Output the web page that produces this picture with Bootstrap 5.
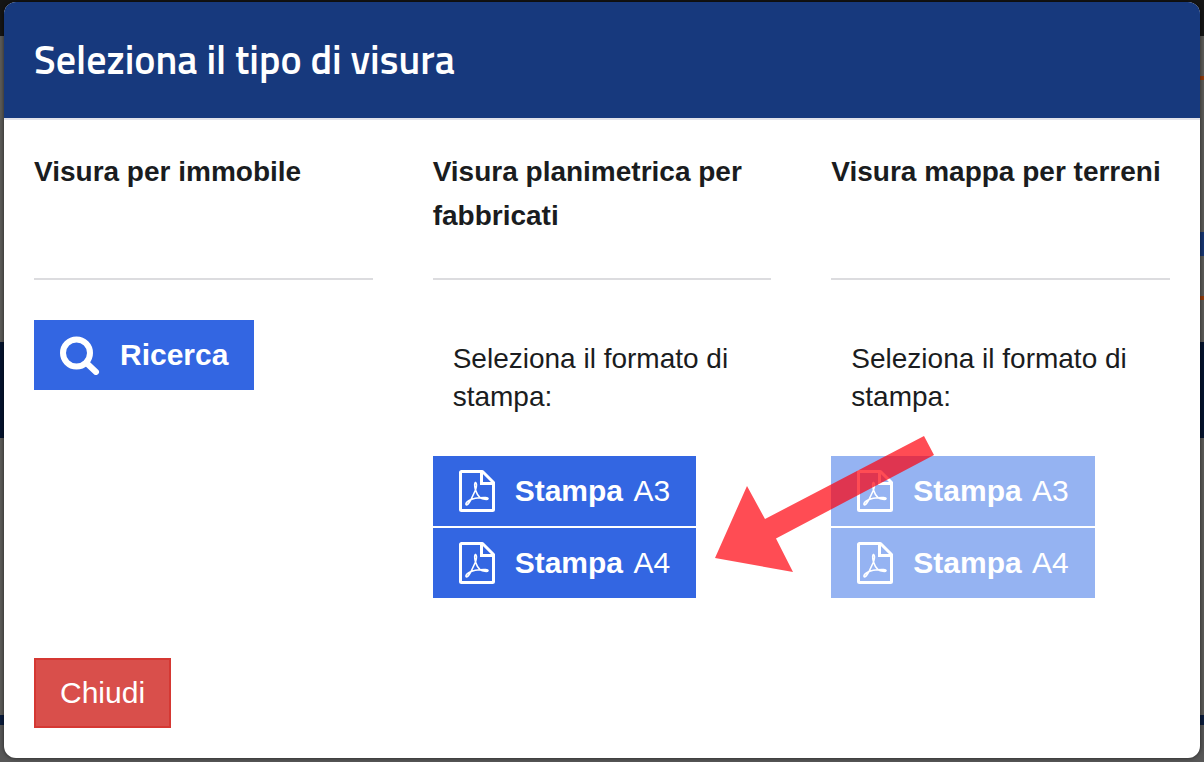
<!DOCTYPE html>
<html lang="it">
<head>
<meta charset="utf-8">
<meta name="viewport" content="width=device-width, initial-scale=1">
<title>Seleziona il tipo di visura</title>
<link href="https://cdn.jsdelivr.net/npm/bootstrap@5.3.0/dist/css/bootstrap.min.css" rel="stylesheet">
<style>
  body {
    font-family: "Liberation Sans", Arial, sans-serif;
    font-size: 28px;
    line-height: 38px;
    color: #1a1c20;
    background: #5a5a5a;
  }
  /* dimmed page behind the dialog */
  .backdrop-page {
    min-height: 100vh;
    padding: 2px 4px 4px;
    background: linear-gradient(#151515 36px, #5c5b58 36px 342px, #05132e 342px 438px, #5c5b58 438px 715px, #0a1c3c 715px 725px, #575757 725px);
  }
  .backdrop-edge { width: 4px; background: linear-gradient(transparent 76px, #943b0a 76px 80px, transparent 80px 232px, #173671 232px 256px, transparent 256px 296px, #943b0a 296px 300px, transparent 300px); }
  .visura-dialog { border: 0; border-radius: 12px; box-shadow: 0 0 4px rgba(0, 0, 0, .6); }
  .visura-header {
    padding: 30px;
    background: #17397d;
    border-bottom: 2px solid #e3e3ea;
    border-radius: 12px 12px 0 0;
  }
  .visura-title { font: 600 40px/56px "Titillium Web", "Open Sans", sans-serif; }
  .visura-body { padding: 30px; }
  .visura-row { --bs-gutter-x: 60px; }
  .visura-heading {
    min-height: 130px;
    margin-bottom: 40px;
    border-bottom: 2px solid #dcdcdf;
    font-size: 28px;
    line-height: 44px;
    font-weight: 700;
  }
  .format-note { padding: 20px 20px 40px; margin: 0; }
  .btn-visura {
    --bs-btn-padding-x: 24px;
    --bs-btn-padding-y: 11px;
    --bs-btn-font-size: 30px;
    --bs-btn-line-height: 44px;
    --bs-btn-border-width: 2px;
    --bs-btn-border-radius: 0;
  }
  .btn-blue {
    --bs-btn-color: #fff;
    --bs-btn-bg: #3366e2;
    --bs-btn-border-color: #3366e2;
    --bs-btn-hover-color: #fff;
    --bs-btn-hover-bg: #2856c8;
    --bs-btn-hover-border-color: #2856c8;
    --bs-btn-disabled-color: #fff;
    --bs-btn-disabled-bg: #95b3f2;
    --bs-btn-disabled-border-color: #95b3f2;
    --bs-btn-disabled-opacity: 1;
  }
  .btn-red {
    --bs-btn-color: #fff;
    --bs-btn-bg: #d94f4b;
    --bs-btn-border-color: #d53833;
    --bs-btn-hover-color: #fff;
    --bs-btn-hover-bg: #c43d39;
    --bs-btn-hover-border-color: #b52f2b;
  }
  .btn-icon { display: inline-flex; align-items: center; gap: 20px; }
  .btn-icon svg { flex: none; }
  .paper-size { margin-left: 2px; }
  .print-stack { gap: 2px; }
  .footer-actions { margin-top: 60px; }
  .pointer-arrow { position: absolute; left: -117px; top: -22px; pointer-events: none; z-index: 2; }
</style>
</head>
<body>
<svg class="d-none" aria-hidden="true">
  <symbol id="icon-pdf" viewBox="0 0 36 42">
    <path d="M23 1.500H2.500a1 1 0 0 0-1 1v37a1 1 0 0 0 1 1h31a1 1 0 0 0 1-1V12.500L24.500 2.500q-1-1-1.500-1z" fill="none" stroke="currentColor" stroke-width="3" stroke-linejoin="round"/>
    <path d="M22.500 2v11.500H34" fill="none" stroke="currentColor" stroke-width="3"/>
    <path d="M16.500 12.500c-1.500 1-.8 4.500 0 7.500 1-3 1.500-6.500 0-7.500zM16.500 20L12 29.500c2.500-1 6-1.700 9-1.800-2-1.700-3.500-4.700-4.500-7.700zM12 29.500c-3 1.500-5.500 3.500-5 5 1 1.500 3-1.500 5-5zM21 27.700c3 1.500 7.500 2.300 8 1s-4-1.200-8-1z" fill="none" stroke="currentColor" stroke-width="1.600" stroke-linejoin="round"/>
  </symbol>
</svg>

<div class="backdrop-page position-relative">
  <div class="backdrop-edge position-absolute top-0 end-0 h-100"></div>
  <main class="modal-content visura-dialog bg-white" role="dialog" aria-labelledby="dialog-title">
    <header class="visura-header text-white">
      <h1 class="visura-title m-0" id="dialog-title">Seleziona il tipo di visura</h1>
    </header>
    <div class="visura-body">
      <div class="row visura-row">
        <section class="col-12 col-md-4">
          <h2 class="visura-heading">Visura per immobile</h2>
          <button type="button" class="btn btn-visura btn-blue btn-icon">
            <svg width="40" height="40" viewBox="0 0 40 40" fill="none" stroke="currentColor" aria-hidden="true"><circle cx="16.500" cy="18" r="13.500" stroke-width="6"/><path d="M27 28.500l9 8.500" stroke-width="6" stroke-linecap="round"/></svg>
            <strong>Ricerca</strong>
          </button>
        </section>
        <section class="col-12 col-md-4">
          <h2 class="visura-heading">Visura planimetrica per fabbricati</h2>
          <p class="format-note">Seleziona il formato di stampa:</p>
          <div class="print-stack d-flex flex-column align-items-start">
            <button type="button" class="btn btn-visura btn-blue btn-icon"><svg width="36" height="42" aria-hidden="true"><use href="#icon-pdf"/></svg><span><strong>Stampa</strong> <span class="paper-size">A3</span></span></button>
            <button type="button" class="btn btn-visura btn-blue btn-icon"><svg width="36" height="42" aria-hidden="true"><use href="#icon-pdf"/></svg><span><strong>Stampa</strong> <span class="paper-size">A4</span></span></button>
          </div>
        </section>
        <section class="col-12 col-md-4">
          <h2 class="visura-heading">Visura mappa per terreni</h2>
          <p class="format-note">Seleziona il formato di stampa:</p>
          <div class="print-stack d-flex flex-column align-items-start position-relative">
            <button type="button" class="btn btn-visura btn-blue btn-icon" disabled><svg width="36" height="42" aria-hidden="true"><use href="#icon-pdf"/></svg><span><strong>Stampa</strong> <span class="paper-size">A3</span></span></button>
            <button type="button" class="btn btn-visura btn-blue btn-icon" disabled><svg width="36" height="42" aria-hidden="true"><use href="#icon-pdf"/></svg><span><strong>Stampa</strong> <span class="paper-size">A4</span></span></button>
            <svg class="pointer-arrow" width="222" height="140" viewBox="0 0 222 140" aria-hidden="true"><path d="M210 2l10 19-158 83.500 17 33.500L1 124l32-72 18 33z" fill="#ff000c" fill-opacity=".7"/></svg>
          </div>
        </section>
      </div>
      <div class="footer-actions">
        <button type="button" class="btn btn-visura btn-red">Chiudi</button>
      </div>
    </div>
  </main>
</div>
<script src="https://cdn.jsdelivr.net/npm/bootstrap@5.3.0/dist/js/bootstrap.bundle.min.js"></script>
</body>
</html>
